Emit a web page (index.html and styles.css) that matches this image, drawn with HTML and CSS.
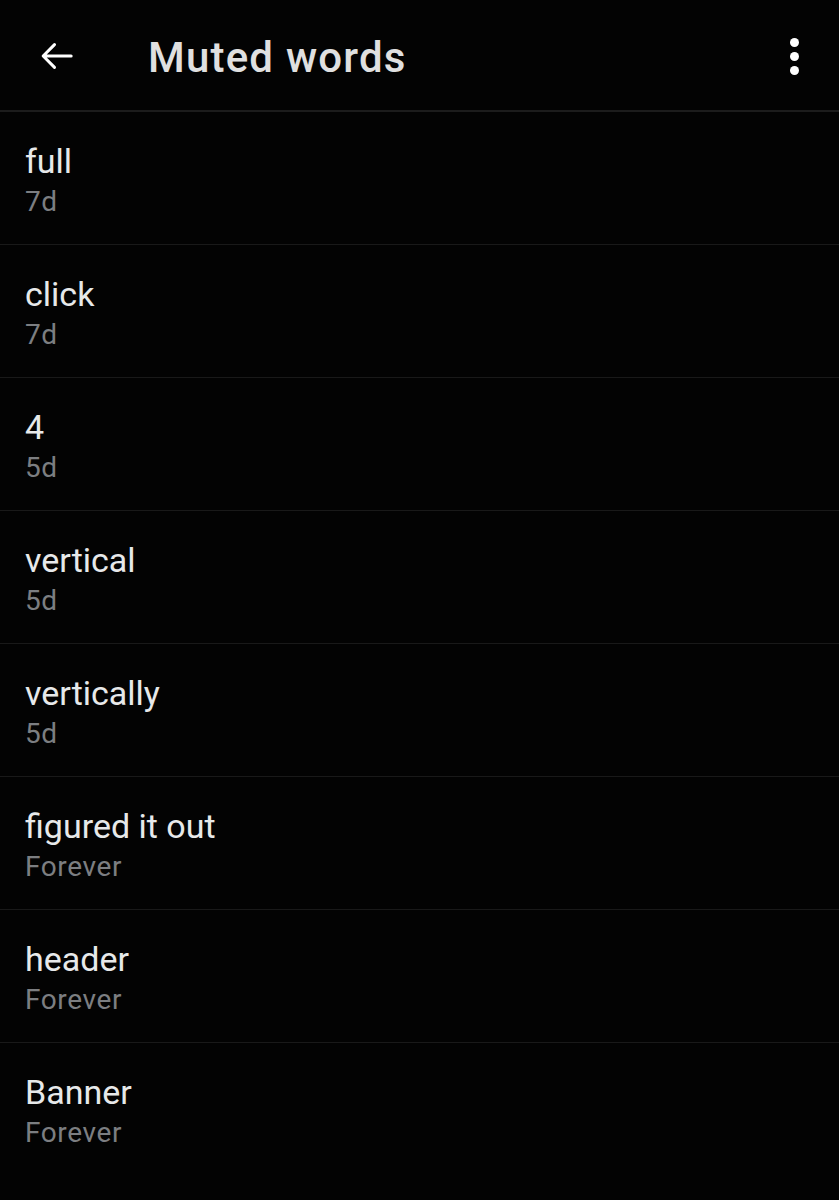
FILE: index.html
```html
<!DOCTYPE html>
<html>
<head>
<meta charset="utf-8">
<link rel="stylesheet" href="styles.css">
</head>
<body>
<div class="app">
  <header class="topbar">
    <div class="back">
      <svg width="40" height="40" viewBox="0 0 24 24"><path d="M20.5 12H4M10.5 5.2L3.7 12l6.8 6.8" fill="none" stroke="#fff" stroke-width="1.8" stroke-linecap="round" stroke-linejoin="round"/></svg>
    </div>
    <h1 class="title">Muted words</h1>
    <div class="more">
      <span class="dot"></span><span class="dot"></span><span class="dot"></span>
    </div>
  </header>
  <ul class="list">
    <li class="item"><div class="word">full</div><div class="dur">7d</div></li>
    <li class="item"><div class="word">click</div><div class="dur">7d</div></li>
    <li class="item"><div class="word">4</div><div class="dur">5d</div></li>
    <li class="item"><div class="word">vertical</div><div class="dur">5d</div></li>
    <li class="item"><div class="word">vertically</div><div class="dur">5d</div></li>
    <li class="item"><div class="word">figured it out</div><div class="dur">Forever</div></li>
    <li class="item"><div class="word">header</div><div class="dur">Forever</div></li>
    <li class="item last"><div class="word">Banner</div><div class="dur">Forever</div></li>
  </ul>
</div>
</body>
</html>
```
FILE: styles.css
```css
html, body {
  margin: 0;
  padding: 0;
  background: #000;
}
body {
  font-family: Roboto, "Noto Sans", sans-serif;
  color: #e7e9ea;
}
.app {
  width: 839px;
  height: 1200px;
  background: #030303;
  overflow: hidden;
}
.topbar {
  height: 110px;
  display: flex;
  align-items: center;
  border-bottom: 2px solid #1c1c1c;
  box-sizing: content-box;
}
.back {
  width: 40px;
  height: 40px;
  margin-left: 37px;
  margin-top: 2px;
  display: flex;
}
.title {
  margin: 4px 0 0 71px;
  font-size: 42px;
  font-weight: 500;
  color: #e0e0e0;
  flex: 1;
  letter-spacing: 1.2px;
}
.more {
  display: flex;
  flex-direction: column;
  gap: 5px;
  margin-right: 40px;
  margin-top: 2px;
}
.dot {
  width: 9px;
  height: 9px;
  border-radius: 50%;
  background: #fff;
}
.list {
  list-style: none;
  margin: 0;
  padding: 0;
}
.item {
  height: 133px;
  box-sizing: border-box;
  border-bottom: 1px solid #191919;
  padding: 29px 25px 0;
}
.word {
  font-size: 34px;
  line-height: 40px;
  color: #e7e9ea;
}
.dur {
  font-size: 28px;
  line-height: 36px;
  margin-top: 3px;
  color: #7c7e81;
  letter-spacing: 0.6px;
}
.last {
  border-bottom: none;
}
```
